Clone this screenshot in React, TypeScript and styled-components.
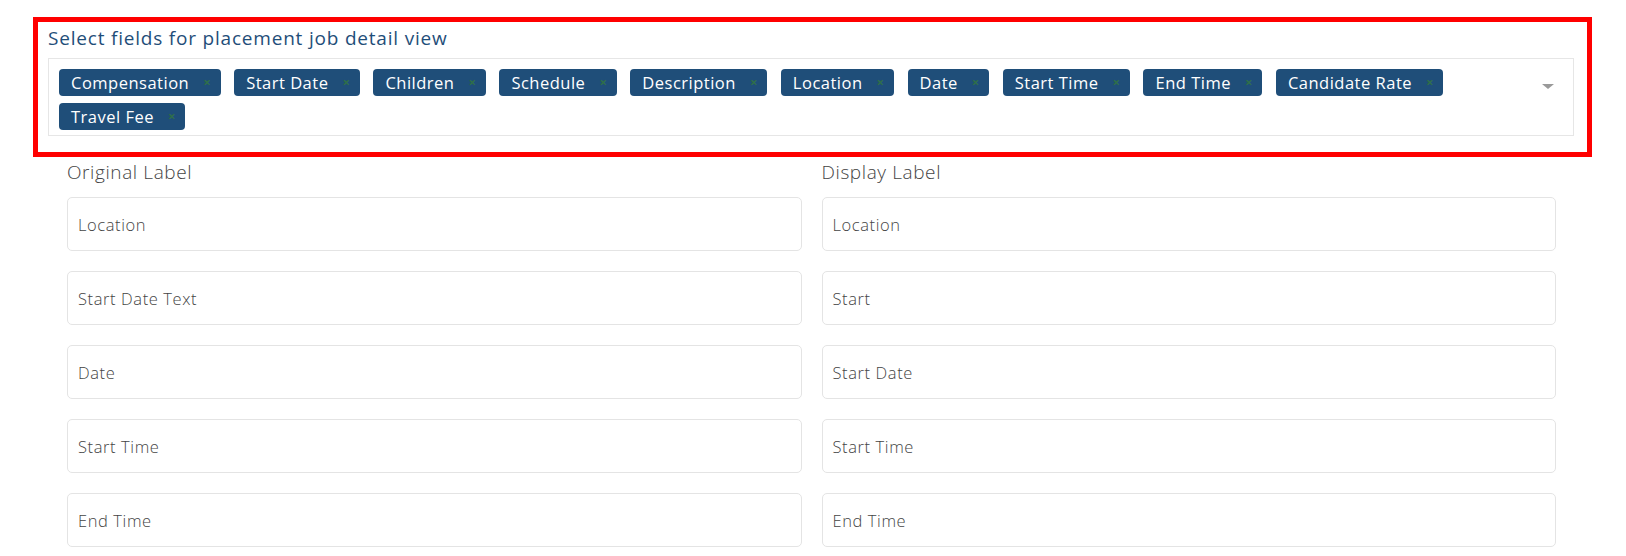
import React from "react";
import styled, { createGlobalStyle } from "styled-components";

const Global = createGlobalStyle`
  html, body { margin: 0; padding: 0; background: #ffffff; }
  body { font-family: "Open Sans", "Noto Sans", sans-serif; }
  * { box-sizing: border-box; }
`;

const Page = styled.div`
  width: 1626px;
  height: 556px;
  overflow: hidden;
  padding: 17px 0 0 33px;
`;

const Highlight = styled.section`
  width: 1559px;
  border: 5px solid #ff0000;
  padding: 4px 13px 16px 10px;
`;

const Title = styled.h2`
  margin: 0 0 7px 0;
  font-size: 19px;
  line-height: 25px;
  font-weight: 500;
  letter-spacing: 0.8px;
  color: #1f4e79;
`;

const TagBox = styled.div`
  position: relative;
  border: 1px solid #e6e6e6;
  padding: 10px 60px 5px 10px;
  display: flex;
  flex-wrap: wrap;
  column-gap: 13.5px;
  row-gap: 7px;
  min-height: 78px;
`;

const Chip = styled.span`
  display: inline-flex;
  align-items: center;
  height: 27px;
  padding: 0 10px 0 12px;
  border-radius: 4px;
  background: #1f4e79;
  color: #ffffff;
  font-size: 16.5px;
  letter-spacing: 0.5px;
  gap: 14px;
`;

const ChipClose = styled.span`
  color: #2f6e4a;
  font-size: 13px;
  line-height: 1;
  font-weight: 700;
  letter-spacing: 0;
`;

const Caret = styled.span`
  position: absolute;
  right: 19px;
  top: 25px;
  width: 0;
  height: 0;
  border-left: 6px solid transparent;
  border-right: 6px solid transparent;
  border-top: 5px solid #9a9a9a;
`;

const Form = styled.div`
  width: 1489px;
  margin: 3px 0 0 34px;
  display: grid;
  grid-template-columns: 1fr 1fr;
  column-gap: 20px;
`;

const Column = styled.div`
  display: flex;
  flex-direction: column;
`;

const ColLabel = styled.div`
  font-size: 19px;
  line-height: 24px;
  font-weight: 300;
  letter-spacing: 0.6px;
  color: #444444;
  margin-bottom: 13px;
`;

const Inputs = styled.div`
  display: flex;
  flex-direction: column;
  gap: 20px;
`;

const Field = styled.div`
  height: 54px;
  border: 1px solid #e4e4e4;
  border-radius: 5px;
  display: flex;
  align-items: center;
  padding: 0 10px;
  font-size: 16.5px;
  font-weight: 300;
  letter-spacing: 0.6px;
  color: #444444;
`;

const chips = [
  "Compensation",
  "Start Date",
  "Children",
  "Schedule",
  "Description",
  "Location",
  "Date",
  "Start Time",
  "End Time",
  "Candidate Rate",
  "Travel Fee",
];

const original = ["Location", "Start Date Text", "Date", "Start Time", "End Time"];
const display = ["Location", "Start", "Start Date", "Start Time", "End Time"];

export default function App() {
  return (
    <Page>
      <Global />
      <Highlight>
        <Title>Select fields for placement job detail view</Title>
        <TagBox>
          {chips.map((c) => (
            <Chip key={c}>
              {c}
              <ChipClose>×</ChipClose>
            </Chip>
          ))}
          <Caret />
        </TagBox>
      </Highlight>
      <Form>
        <Column>
          <ColLabel>Original Label</ColLabel>
          <Inputs>
            {original.map((o, i) => (
              <Field key={i}>{o}</Field>
            ))}
          </Inputs>
        </Column>
        <Column>
          <ColLabel>Display Label</ColLabel>
          <Inputs>
            {display.map((o, i) => (
              <Field key={i}>{o}</Field>
            ))}
          </Inputs>
        </Column>
      </Form>
    </Page>
  );
}
